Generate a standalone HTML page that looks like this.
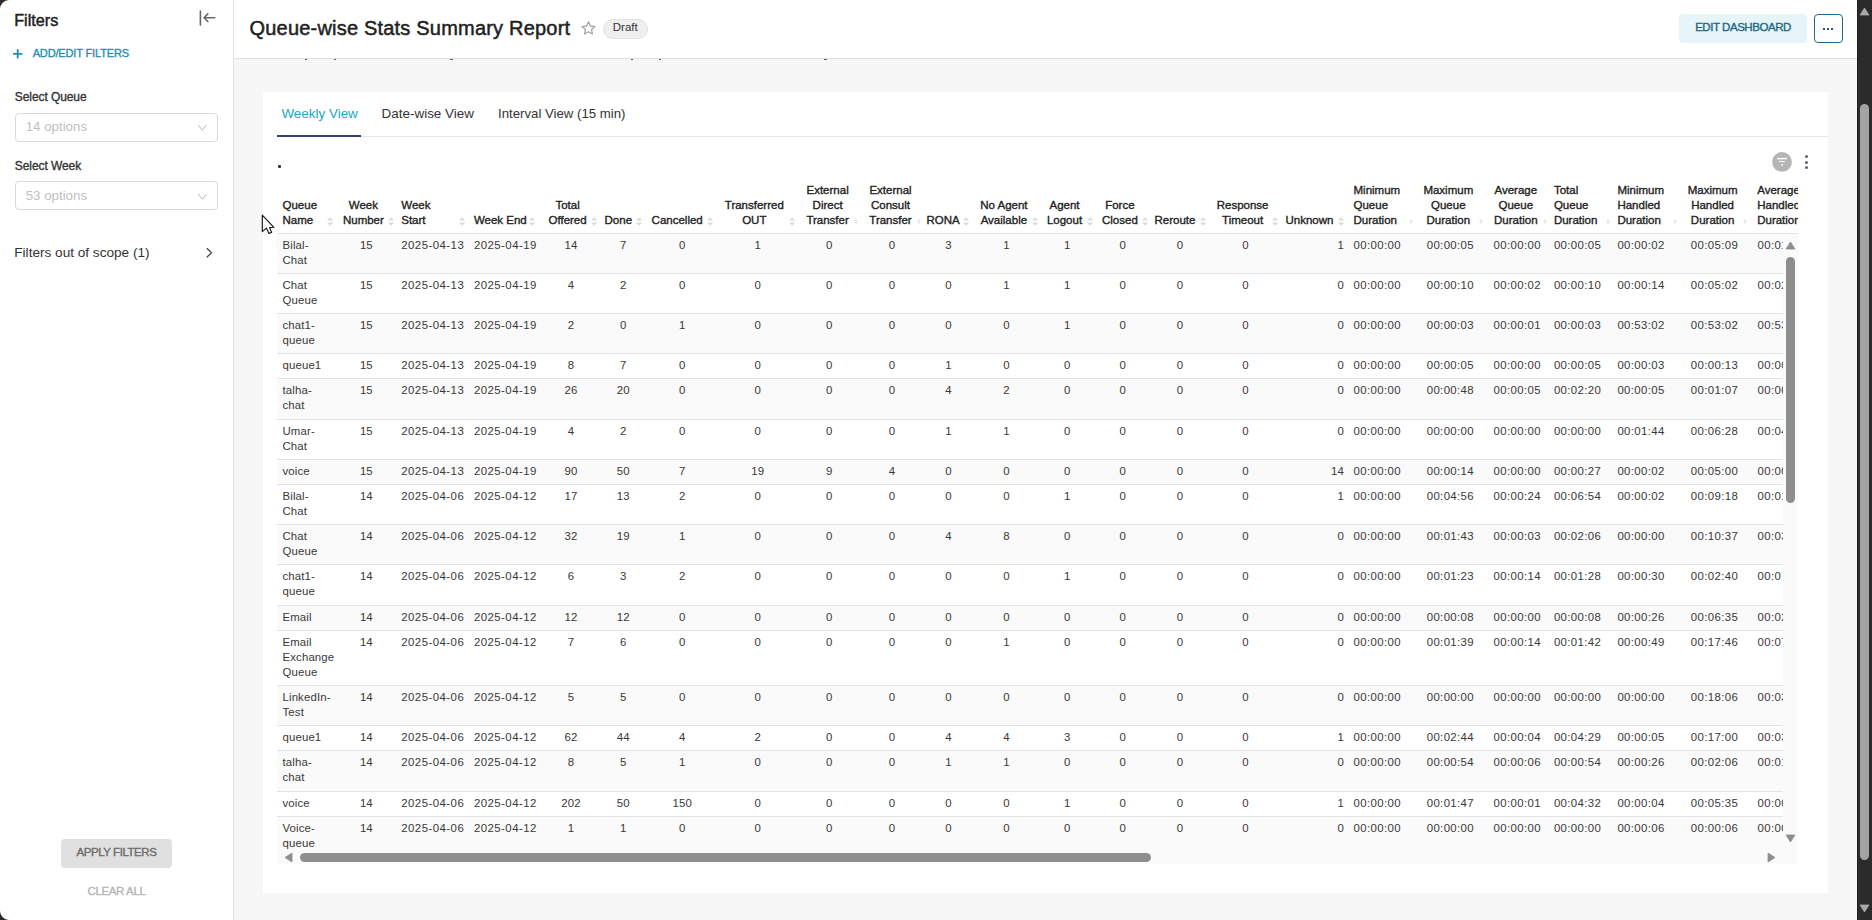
<!DOCTYPE html><html><head><meta charset="utf-8"><title>Queue-wise Stats Summary Report</title><style>

html,body{margin:0;padding:0;}
body{width:1872px;height:920px;overflow:hidden;position:relative;background:#f7f7f7;font-family:"Liberation Sans", sans-serif;color:#333;}
.a{position:absolute;white-space:nowrap;}
.hd{position:absolute;font-size:11.5px;font-weight:normal;line-height:15px;color:#222;white-space:nowrap;-webkit-text-stroke:0.35px #222;}
.td{position:absolute;font-size:11.4px;letter-spacing:0.14px;line-height:15px;color:#383838;white-space:nowrap;}
.ic{position:absolute;}

</style></head><body>
<div style="position:absolute;left:0px;top:0px;width:233px;height:920px;background:#fff;"></div>
<div style="position:absolute;left:233px;top:0px;width:1px;height:920px;background:#e3e3e3;"></div>
<div class="a" style="left:14.2px;top:11.5px;font-size:16.2px;line-height:17px;color:#222;-webkit-text-stroke:0.45px #222;">Filters</div>
<svg class="ic" style="left:196px;top:8px" width="22" height="20" viewBox="0 0 22 20"><path d="M4.4 3v14" stroke="#666" stroke-width="1.6" stroke-linecap="round"/><path d="M18.8 9.7H8.2M11.8 5.9L8 9.7l3.8 3.8" stroke="#666" stroke-width="1.6" fill="none" stroke-linecap="round" stroke-linejoin="round"/></svg>
<svg class="ic" style="left:12px;top:48px" width="12" height="12" viewBox="0 0 12 12"><path d="M5.7 1.2v9.4M1 5.9h9.4" stroke="#1d8fb1" stroke-width="1.8"/></svg>
<div class="a" style="left:32.7px;top:46px;font-size:11px;line-height:14px;color:#1d8fb1;letter-spacing:-0.15px;-webkit-text-stroke:0.35px #1d8fb1;">ADD/EDIT FILTERS</div>
<div class="a" style="left:14.8px;top:90px;font-size:12px;line-height:14px;color:#333;letter-spacing:-0.08px;-webkit-text-stroke:0.35px #333;">Select Queue</div>
<div style="position:absolute;left:14.5px;top:113.3px;width:201px;height:26.4px;border:1px solid #d9d9d9;border-radius:4px;background:#fff;"></div>
<div class="a" style="left:25.7px;top:119px;font-size:13.3px;line-height:16px;color:#bfbfbf;">14 options</div>
<svg class="ic" style="left:196px;top:122px" width="12" height="10" viewBox="0 0 12 10"><path d="M2.2 2.9l4.1 5.4 4.1-5.4" stroke="#bbb" stroke-width="1" fill="none"/></svg>
<div class="a" style="left:14.8px;top:159px;font-size:12px;line-height:14px;color:#333;letter-spacing:-0.08px;-webkit-text-stroke:0.35px #333;">Select Week</div>
<div style="position:absolute;left:14.5px;top:181.4px;width:201px;height:26.4px;border:1px solid #d9d9d9;border-radius:4px;background:#fff;"></div>
<div class="a" style="left:25.7px;top:188px;font-size:13.3px;line-height:16px;color:#bfbfbf;">53 options</div>
<svg class="ic" style="left:196px;top:191px" width="12" height="10" viewBox="0 0 12 10"><path d="M2.2 2.9l4.1 5.4 4.1-5.4" stroke="#bbb" stroke-width="1" fill="none"/></svg>
<div class="a" style="left:14.3px;top:244.5px;font-size:13.6px;line-height:16px;color:#333;">Filters out of scope (1)</div>
<svg class="ic" style="left:203px;top:246px" width="12" height="12" viewBox="0 0 12 12"><path d="M3.8 2.2l4.8 4.5-4.8 4.5" stroke="#444" stroke-width="1.25" fill="none"/></svg>
<div style="position:absolute;left:61.25px;top:839.25px;width:110.5px;height:28.25px;background:#e0e0e0;border-radius:4px;"></div>
<div class="a" style="left:61.25px;top:845px;width:110.5px;text-align:center;font-size:11.5px;line-height:14px;color:#6b6b6b;letter-spacing:-0.45px;-webkit-text-stroke:0.35px #6b6b6b;">APPLY FILTERS</div>
<div class="a" style="left:61.25px;top:884px;width:110.5px;text-align:center;font-size:11.5px;line-height:14px;color:#b5b5b5;letter-spacing:-0.4px;-webkit-text-stroke:0.35px #b5b5b5;">CLEAR ALL</div>
<div style="position:absolute;left:234px;top:0px;width:1623px;height:58px;background:#fff;"></div>
<div style="position:absolute;left:234px;top:58px;width:1623px;height:1px;background:#e0e0e0;"></div>
<div class="a" style="left:249.5px;top:16.5px;font-size:20px;line-height:23px;color:#1f1f1f;letter-spacing:0.2px;-webkit-text-stroke:0.5px #1f1f1f;">Queue-wise Stats Summary Report</div>
<svg class="ic" style="left:580px;top:20px" width="17" height="17" viewBox="0 0 17 17"><path d="M8.5 1.9l1.95 4.1 4.45.55-3.3 3.05.85 4.4L8.5 11.8 4.55 14l.85-4.4L2.1 6.55 6.55 6z" fill="none" stroke="#a6a6a6" stroke-width="1.3" stroke-linejoin="round"/></svg>
<div style="position:absolute;left:603.2px;top:19.1px;width:42.4px;height:17.7px;background:#efefef;border:1px solid #e2e2e2;border-radius:10px;"></div>
<div class="a" style="left:612.8px;top:20.5px;font-size:11.5px;line-height:13px;color:#333;">Draft</div>
<div style="position:absolute;left:305px;top:59px;width:2px;height:1px;background:#5a5a5a;"></div>
<div style="position:absolute;left:334px;top:59px;width:2px;height:1px;background:#5a5a5a;"></div>
<div style="position:absolute;left:450.2px;top:59px;width:2.6px;height:1px;background:#5a5a5a;"></div>
<div style="position:absolute;left:630.5px;top:59px;width:2.3px;height:1px;background:#5a5a5a;"></div>
<div style="position:absolute;left:658.7px;top:59px;width:2.3px;height:1px;background:#5a5a5a;"></div>
<div style="position:absolute;left:824px;top:59px;width:2.6px;height:1px;background:#5a5a5a;"></div>
<div style="position:absolute;left:1679px;top:13.8px;width:128px;height:29.2px;background:#e6f5f8;border-radius:4px;"></div>
<div class="a" style="left:1679px;top:20px;width:128px;text-align:center;font-size:11.5px;line-height:14px;color:#1d6783;letter-spacing:-0.45px;-webkit-text-stroke:0.35px #1d6783;">EDIT DASHBOARD</div>
<div style="position:absolute;left:1814px;top:14px;width:26.8px;height:26.8px;border:1px solid #1d6a86;border-radius:4px;background:#fff;"></div>
<div style="position:absolute;left:1822.9px;top:27.9px;width:2.2px;height:2.2px;background:#164f66;border-radius:0.6px;"></div>
<div style="position:absolute;left:1827px;top:27.9px;width:2.2px;height:2.2px;background:#164f66;border-radius:0.6px;"></div>
<div style="position:absolute;left:1831px;top:27.9px;width:2.2px;height:2.2px;background:#164f66;border-radius:0.6px;"></div>
<div style="position:absolute;left:263px;top:92px;width:1565px;height:801px;background:#fff;"></div>
<div class="a" style="left:281.4px;top:104.5px;font-size:13.45px;line-height:17px;color:#20a6c8;">Weekly View</div>
<div class="a" style="left:381.6px;top:104.5px;font-size:13.45px;line-height:17px;color:#333;">Date-wise View</div>
<div class="a" style="left:498.1px;top:104.5px;font-size:13.2px;line-height:17px;color:#333;">Interval View (15 min)</div>
<div style="position:absolute;left:277px;top:136px;width:1551px;height:1px;background:#e8e8e8;"></div>
<div style="position:absolute;left:277px;top:134.8px;width:84px;height:2px;background:#333d6f;"></div>
<div style="position:absolute;left:278.2px;top:165.4px;width:2.4px;height:2.4px;background:#333;border-radius:1px;"></div>
<svg class="ic" style="left:1771px;top:151px" width="22" height="22" viewBox="0 0 22 22"><circle cx="11" cy="10.9" r="9.9" fill="#b5b5b5"/><path d="M6 7.6h10" stroke="#fff" stroke-width="1.4"/><path d="M8.1 10.6h5.8" stroke="#fff" stroke-width="1"/><rect x="10.3" y="13.1" width="1.6" height="1.7" fill="#fff"/></svg>
<div class="ic" style="left:1805px;top:154.8px;width:3px;height:3px;border-radius:50%;background:#5a6470;"></div>
<div class="ic" style="left:1805px;top:160.5px;width:3px;height:3px;border-radius:50%;background:#5a6470;"></div>
<div class="ic" style="left:1805px;top:165.9px;width:3px;height:3px;border-radius:50%;background:#5a6470;"></div>
<div style="position:absolute;left:277px;top:180px;width:1521px;height:54px;overflow:hidden;">
<div class="hd" style="left:5.5px;top:17.69999999999999px;">Queue<br>Name</div>
<svg class="ic" style="left:50.200000000000024px;top:36.5px" width="6.4" height="9" viewBox="0 0 6.4 9"><path d="M3.2 0.3L6.3 3.6H0.1z M3.2 8.7L6.3 5.4H0.1z" fill="#dadada"/></svg>
<div class="hd" style="left:36.39999999999998px;top:17.69999999999999px;width:100px;text-align:center;">Week<br>Number</div>
<svg class="ic" style="left:110.9px;top:36.5px" width="6.4" height="9" viewBox="0 0 6.4 9"><path d="M3.2 0.3L6.3 3.6H0.1z M3.2 8.7L6.3 5.4H0.1z" fill="#dadada"/></svg>
<div class="hd" style="left:124.25px;top:17.69999999999999px;">Week<br>Start</div>
<svg class="ic" style="left:181.49999999999997px;top:36.5px" width="6.4" height="9" viewBox="0 0 6.4 9"><path d="M3.2 0.3L6.3 3.6H0.1z M3.2 8.7L6.3 5.4H0.1z" fill="#dadada"/></svg>
<div class="hd" style="left:196.89999999999998px;top:32.69999999999999px;">Week End</div>
<svg class="ic" style="left:251.99999999999997px;top:36.5px" width="6.4" height="9" viewBox="0 0 6.4 9"><path d="M3.2 0.3L6.3 3.6H0.1z M3.2 8.7L6.3 5.4H0.1z" fill="#dadada"/></svg>
<div class="hd" style="left:240.60000000000002px;top:17.69999999999999px;width:100px;text-align:center;">Total<br>Offered</div>
<svg class="ic" style="left:314.30000000000007px;top:36.5px" width="6.4" height="9" viewBox="0 0 6.4 9"><path d="M3.2 0.3L6.3 3.6H0.1z M3.2 8.7L6.3 5.4H0.1z" fill="#dadada"/></svg>
<div class="hd" style="left:291.29999999999995px;top:32.69999999999999px;width:100px;text-align:center;">Done</div>
<svg class="ic" style="left:359.0px;top:36.5px" width="6.4" height="9" viewBox="0 0 6.4 9"><path d="M3.2 0.3L6.3 3.6H0.1z M3.2 8.7L6.3 5.4H0.1z" fill="#dadada"/></svg>
<div class="hd" style="left:350.20000000000005px;top:32.69999999999999px;width:100px;text-align:center;">Cancelled</div>
<svg class="ic" style="left:429.80000000000007px;top:36.5px" width="6.4" height="9" viewBox="0 0 6.4 9"><path d="M3.2 0.3L6.3 3.6H0.1z M3.2 8.7L6.3 5.4H0.1z" fill="#dadada"/></svg>
<div class="hd" style="left:427.29999999999995px;top:17.69999999999999px;width:100px;text-align:center;">Transferred<br>OUT</div>
<svg class="ic" style="left:511.5px;top:36.5px" width="6.4" height="9" viewBox="0 0 6.4 9"><path d="M3.2 0.3L6.3 3.6H0.1z M3.2 8.7L6.3 5.4H0.1z" fill="#dadada"/></svg>
<div class="hd" style="left:500.6px;top:2.6999999999999886px;width:100px;text-align:center;">External<br>Direct<br>Transfer</div>
<svg class="ic" style="left:577.2px;top:38.5px" width="4" height="5" viewBox="0 0 4 5"><path d="M2 0.2L3.8 2.2H0.2z M2 4.8L3.8 2.8H0.2z" fill="#e2e2e2"/></svg>
<div class="hd" style="left:563.5px;top:2.6999999999999886px;width:100px;text-align:center;">External<br>Consult<br>Transfer</div>
<svg class="ic" style="left:640px;top:38.5px" width="4" height="5" viewBox="0 0 4 5"><path d="M2 0.2L3.8 2.2H0.2z M2 4.8L3.8 2.8H0.2z" fill="#e2e2e2"/></svg>
<div class="hd" style="left:616.1px;top:32.69999999999999px;width:100px;text-align:center;">RONA</div>
<svg class="ic" style="left:685.6px;top:36.5px" width="6.4" height="9" viewBox="0 0 6.4 9"><path d="M3.2 0.3L6.3 3.6H0.1z M3.2 8.7L6.3 5.4H0.1z" fill="#dadada"/></svg>
<div class="hd" style="left:676.9px;top:17.69999999999999px;width:100px;text-align:center;">No Agent<br>Available</div>
<svg class="ic" style="left:754.8000000000001px;top:36.5px" width="6.4" height="9" viewBox="0 0 6.4 9"><path d="M3.2 0.3L6.3 3.6H0.1z M3.2 8.7L6.3 5.4H0.1z" fill="#dadada"/></svg>
<div class="hd" style="left:737.5px;top:17.69999999999999px;width:100px;text-align:center;">Agent<br>Logout</div>
<svg class="ic" style="left:810.0000000000001px;top:36.5px" width="6.4" height="9" viewBox="0 0 6.4 9"><path d="M3.2 0.3L6.3 3.6H0.1z M3.2 8.7L6.3 5.4H0.1z" fill="#dadada"/></svg>
<div class="hd" style="left:792.9000000000001px;top:17.69999999999999px;width:100px;text-align:center;">Force<br>Closed</div>
<svg class="ic" style="left:864.6px;top:36.5px" width="6.4" height="9" viewBox="0 0 6.4 9"><path d="M3.2 0.3L6.3 3.6H0.1z M3.2 8.7L6.3 5.4H0.1z" fill="#dadada"/></svg>
<div class="hd" style="left:848.0px;top:32.69999999999999px;width:100px;text-align:center;">Reroute</div>
<svg class="ic" style="left:922.9px;top:36.5px" width="6.4" height="9" viewBox="0 0 6.4 9"><path d="M3.2 0.3L6.3 3.6H0.1z M3.2 8.7L6.3 5.4H0.1z" fill="#dadada"/></svg>
<div class="hd" style="left:915.5999999999999px;top:17.69999999999999px;width:100px;text-align:center;">Response<br>Timeout</div>
<svg class="ic" style="left:995.1px;top:36.5px" width="6.4" height="9" viewBox="0 0 6.4 9"><path d="M3.2 0.3L6.3 3.6H0.1z M3.2 8.7L6.3 5.4H0.1z" fill="#dadada"/></svg>
<div class="hd" style="left:982.5px;top:32.69999999999999px;width:100px;text-align:center;">Unknown</div>
<svg class="ic" style="left:1060.8px;top:36.5px" width="6.4" height="9" viewBox="0 0 6.4 9"><path d="M3.2 0.3L6.3 3.6H0.1z M3.2 8.7L6.3 5.4H0.1z" fill="#dadada"/></svg>
<div class="hd" style="left:1076.5px;top:2.6999999999999886px;">Minimum<br>Queue<br>Duration</div>
<svg class="ic" style="left:1132.3px;top:38.5px" width="4" height="5" viewBox="0 0 4 5"><path d="M2 0.2L3.8 2.2H0.2z M2 4.8L3.8 2.8H0.2z" fill="#e2e2e2"/></svg>
<div class="hd" style="left:1121.3px;top:2.6999999999999886px;width:100px;text-align:center;">Maximum<br>Queue<br>Duration</div>
<svg class="ic" style="left:1201.9px;top:38.5px" width="4" height="5" viewBox="0 0 4 5"><path d="M2 0.2L3.8 2.2H0.2z M2 4.8L3.8 2.8H0.2z" fill="#e2e2e2"/></svg>
<div class="hd" style="left:1188.8px;top:2.6999999999999886px;width:100px;text-align:center;">Average<br>Queue<br>Duration</div>
<svg class="ic" style="left:1266px;top:38.5px" width="4" height="5" viewBox="0 0 4 5"><path d="M2 0.2L3.8 2.2H0.2z M2 4.8L3.8 2.8H0.2z" fill="#e2e2e2"/></svg>
<div class="hd" style="left:1276.9px;top:2.6999999999999886px;">Total<br>Queue<br>Duration</div>
<svg class="ic" style="left:1329.25px;top:38.5px" width="4" height="5" viewBox="0 0 4 5"><path d="M2 0.2L3.8 2.2H0.2z M2 4.8L3.8 2.8H0.2z" fill="#e2e2e2"/></svg>
<div class="hd" style="left:1340.4px;top:2.6999999999999886px;">Minimum<br>Handled<br>Duration</div>
<svg class="ic" style="left:1395.9px;top:38.5px" width="4" height="5" viewBox="0 0 4 5"><path d="M2 0.2L3.8 2.2H0.2z M2 4.8L3.8 2.8H0.2z" fill="#e2e2e2"/></svg>
<div class="hd" style="left:1385.6px;top:2.6999999999999886px;width:100px;text-align:center;">Maximum<br>Handled<br>Duration</div>
<svg class="ic" style="left:1466px;top:38.5px" width="4" height="5" viewBox="0 0 4 5"><path d="M2 0.2L3.8 2.2H0.2z M2 4.8L3.8 2.8H0.2z" fill="#e2e2e2"/></svg>
<div class="hd" style="left:1480.2px;top:2.6999999999999886px;">Average<br>Handled<br>Duration</div>
<div style="position:absolute;left:0px;top:53px;width:1521px;height:1px;background:#e3e3e3;"></div>
</div>
<div style="position:absolute;left:277px;top:234px;width:1506px;height:615px;overflow:hidden;background:#fafafa;">
<div style="position:absolute;left:0px;top:0px;width:1506px;height:39px;background:#fafafa;"></div>
<div class="td" style="left:5.5px;top:4.1px;letter-spacing:0.14px;">Bilal-<br>Chat</div>
<div class="td" style="left:39.37000000000001px;top:4.1px;width:100px;text-align:center;letter-spacing:0.14px;">15</div>
<div class="td" style="left:124.25px;top:4.1px;letter-spacing:0.47px;">2025-04-13</div>
<div class="td" style="left:196.89999999999998px;top:4.1px;letter-spacing:0.47px;">2025-04-19</div>
<div class="td" style="left:244.07px;top:4.1px;width:100px;text-align:center;letter-spacing:0.14px;">14</div>
<div class="td" style="left:296.27000000000004px;top:4.1px;width:100px;text-align:center;letter-spacing:0.14px;">7</div>
<div class="td" style="left:355.27000000000004px;top:4.1px;width:100px;text-align:center;letter-spacing:0.14px;">0</div>
<div class="td" style="left:430.67px;top:4.1px;width:100px;text-align:center;letter-spacing:0.14px;">1</div>
<div class="td" style="left:502.27000000000004px;top:4.1px;width:100px;text-align:center;letter-spacing:0.14px;">0</div>
<div class="td" style="left:565.07px;top:4.1px;width:100px;text-align:center;letter-spacing:0.14px;">0</div>
<div class="td" style="left:621.57px;top:4.1px;width:100px;text-align:center;letter-spacing:0.14px;">3</div>
<div class="td" style="left:679.47px;top:4.1px;width:100px;text-align:center;letter-spacing:0.14px;">1</div>
<div class="td" style="left:740.2700000000001px;top:4.1px;width:100px;text-align:center;letter-spacing:0.14px;">1</div>
<div class="td" style="left:795.87px;top:4.1px;width:100px;text-align:center;letter-spacing:0.14px;">0</div>
<div class="td" style="left:853.07px;top:4.1px;width:100px;text-align:center;letter-spacing:0.14px;">0</div>
<div class="td" style="left:918.4700000000001px;top:4.1px;width:100px;text-align:center;letter-spacing:0.14px;">0</div>
<div class="td" style="left:967px;top:4.1px;width:100px;text-align:right;">1</div>
<div class="td" style="left:1076.5px;top:4.1px;letter-spacing:0.38px;">00:00:00</div>
<div class="td" style="left:1123.39px;top:4.1px;width:100px;text-align:center;letter-spacing:0.38px;">00:00:05</div>
<div class="td" style="left:1190.19px;top:4.1px;width:100px;text-align:center;letter-spacing:0.38px;">00:00:00</div>
<div class="td" style="left:1276.9px;top:4.1px;letter-spacing:0.38px;">00:00:05</div>
<div class="td" style="left:1340.4px;top:4.1px;letter-spacing:0.38px;">00:00:02</div>
<div class="td" style="left:1387.49px;top:4.1px;width:100px;text-align:center;letter-spacing:0.38px;">00:05:09</div>
<div class="td" style="left:1480.6px;top:4.1px;letter-spacing:0.38px;">00:01:09</div>
<div style="position:absolute;left:0px;top:39px;width:1506px;height:1px;background:#e3e3e3;"></div>
<div style="position:absolute;left:0px;top:40px;width:1506px;height:39px;background:#ffffff;"></div>
<div class="td" style="left:5.5px;top:44.1px;letter-spacing:0.14px;">Chat<br>Queue</div>
<div class="td" style="left:39.37000000000001px;top:44.1px;width:100px;text-align:center;letter-spacing:0.14px;">15</div>
<div class="td" style="left:124.25px;top:44.1px;letter-spacing:0.47px;">2025-04-13</div>
<div class="td" style="left:196.89999999999998px;top:44.1px;letter-spacing:0.47px;">2025-04-19</div>
<div class="td" style="left:244.07px;top:44.1px;width:100px;text-align:center;letter-spacing:0.14px;">4</div>
<div class="td" style="left:296.27000000000004px;top:44.1px;width:100px;text-align:center;letter-spacing:0.14px;">2</div>
<div class="td" style="left:355.27000000000004px;top:44.1px;width:100px;text-align:center;letter-spacing:0.14px;">0</div>
<div class="td" style="left:430.67px;top:44.1px;width:100px;text-align:center;letter-spacing:0.14px;">0</div>
<div class="td" style="left:502.27000000000004px;top:44.1px;width:100px;text-align:center;letter-spacing:0.14px;">0</div>
<div class="td" style="left:565.07px;top:44.1px;width:100px;text-align:center;letter-spacing:0.14px;">0</div>
<div class="td" style="left:621.57px;top:44.1px;width:100px;text-align:center;letter-spacing:0.14px;">0</div>
<div class="td" style="left:679.47px;top:44.1px;width:100px;text-align:center;letter-spacing:0.14px;">1</div>
<div class="td" style="left:740.2700000000001px;top:44.1px;width:100px;text-align:center;letter-spacing:0.14px;">1</div>
<div class="td" style="left:795.87px;top:44.1px;width:100px;text-align:center;letter-spacing:0.14px;">0</div>
<div class="td" style="left:853.07px;top:44.1px;width:100px;text-align:center;letter-spacing:0.14px;">0</div>
<div class="td" style="left:918.4700000000001px;top:44.1px;width:100px;text-align:center;letter-spacing:0.14px;">0</div>
<div class="td" style="left:967px;top:44.1px;width:100px;text-align:right;">0</div>
<div class="td" style="left:1076.5px;top:44.1px;letter-spacing:0.38px;">00:00:00</div>
<div class="td" style="left:1123.39px;top:44.1px;width:100px;text-align:center;letter-spacing:0.38px;">00:00:10</div>
<div class="td" style="left:1190.19px;top:44.1px;width:100px;text-align:center;letter-spacing:0.38px;">00:00:02</div>
<div class="td" style="left:1276.9px;top:44.1px;letter-spacing:0.38px;">00:00:10</div>
<div class="td" style="left:1340.4px;top:44.1px;letter-spacing:0.38px;">00:00:14</div>
<div class="td" style="left:1387.49px;top:44.1px;width:100px;text-align:center;letter-spacing:0.38px;">00:05:02</div>
<div class="td" style="left:1480.6px;top:44.1px;letter-spacing:0.38px;">00:02:38</div>
<div style="position:absolute;left:0px;top:79px;width:1506px;height:1px;background:#e3e3e3;"></div>
<div style="position:absolute;left:0px;top:80px;width:1506px;height:39px;background:#fafafa;"></div>
<div class="td" style="left:5.5px;top:84.1px;letter-spacing:0.14px;">chat1-<br>queue</div>
<div class="td" style="left:39.37000000000001px;top:84.1px;width:100px;text-align:center;letter-spacing:0.14px;">15</div>
<div class="td" style="left:124.25px;top:84.1px;letter-spacing:0.47px;">2025-04-13</div>
<div class="td" style="left:196.89999999999998px;top:84.1px;letter-spacing:0.47px;">2025-04-19</div>
<div class="td" style="left:244.07px;top:84.1px;width:100px;text-align:center;letter-spacing:0.14px;">2</div>
<div class="td" style="left:296.27000000000004px;top:84.1px;width:100px;text-align:center;letter-spacing:0.14px;">0</div>
<div class="td" style="left:355.27000000000004px;top:84.1px;width:100px;text-align:center;letter-spacing:0.14px;">1</div>
<div class="td" style="left:430.67px;top:84.1px;width:100px;text-align:center;letter-spacing:0.14px;">0</div>
<div class="td" style="left:502.27000000000004px;top:84.1px;width:100px;text-align:center;letter-spacing:0.14px;">0</div>
<div class="td" style="left:565.07px;top:84.1px;width:100px;text-align:center;letter-spacing:0.14px;">0</div>
<div class="td" style="left:621.57px;top:84.1px;width:100px;text-align:center;letter-spacing:0.14px;">0</div>
<div class="td" style="left:679.47px;top:84.1px;width:100px;text-align:center;letter-spacing:0.14px;">0</div>
<div class="td" style="left:740.2700000000001px;top:84.1px;width:100px;text-align:center;letter-spacing:0.14px;">1</div>
<div class="td" style="left:795.87px;top:84.1px;width:100px;text-align:center;letter-spacing:0.14px;">0</div>
<div class="td" style="left:853.07px;top:84.1px;width:100px;text-align:center;letter-spacing:0.14px;">0</div>
<div class="td" style="left:918.4700000000001px;top:84.1px;width:100px;text-align:center;letter-spacing:0.14px;">0</div>
<div class="td" style="left:967px;top:84.1px;width:100px;text-align:right;">0</div>
<div class="td" style="left:1076.5px;top:84.1px;letter-spacing:0.38px;">00:00:00</div>
<div class="td" style="left:1123.39px;top:84.1px;width:100px;text-align:center;letter-spacing:0.38px;">00:00:03</div>
<div class="td" style="left:1190.19px;top:84.1px;width:100px;text-align:center;letter-spacing:0.38px;">00:00:01</div>
<div class="td" style="left:1276.9px;top:84.1px;letter-spacing:0.38px;">00:00:03</div>
<div class="td" style="left:1340.4px;top:84.1px;letter-spacing:0.38px;">00:53:02</div>
<div class="td" style="left:1387.49px;top:84.1px;width:100px;text-align:center;letter-spacing:0.38px;">00:53:02</div>
<div class="td" style="left:1480.6px;top:84.1px;letter-spacing:0.38px;">00:53:02</div>
<div style="position:absolute;left:0px;top:119px;width:1506px;height:1px;background:#e3e3e3;"></div>
<div style="position:absolute;left:0px;top:120px;width:1506px;height:24px;background:#ffffff;"></div>
<div class="td" style="left:5.5px;top:124.1px;letter-spacing:0.14px;">queue1</div>
<div class="td" style="left:39.37000000000001px;top:124.1px;width:100px;text-align:center;letter-spacing:0.14px;">15</div>
<div class="td" style="left:124.25px;top:124.1px;letter-spacing:0.47px;">2025-04-13</div>
<div class="td" style="left:196.89999999999998px;top:124.1px;letter-spacing:0.47px;">2025-04-19</div>
<div class="td" style="left:244.07px;top:124.1px;width:100px;text-align:center;letter-spacing:0.14px;">8</div>
<div class="td" style="left:296.27000000000004px;top:124.1px;width:100px;text-align:center;letter-spacing:0.14px;">7</div>
<div class="td" style="left:355.27000000000004px;top:124.1px;width:100px;text-align:center;letter-spacing:0.14px;">0</div>
<div class="td" style="left:430.67px;top:124.1px;width:100px;text-align:center;letter-spacing:0.14px;">0</div>
<div class="td" style="left:502.27000000000004px;top:124.1px;width:100px;text-align:center;letter-spacing:0.14px;">0</div>
<div class="td" style="left:565.07px;top:124.1px;width:100px;text-align:center;letter-spacing:0.14px;">0</div>
<div class="td" style="left:621.57px;top:124.1px;width:100px;text-align:center;letter-spacing:0.14px;">1</div>
<div class="td" style="left:679.47px;top:124.1px;width:100px;text-align:center;letter-spacing:0.14px;">0</div>
<div class="td" style="left:740.2700000000001px;top:124.1px;width:100px;text-align:center;letter-spacing:0.14px;">0</div>
<div class="td" style="left:795.87px;top:124.1px;width:100px;text-align:center;letter-spacing:0.14px;">0</div>
<div class="td" style="left:853.07px;top:124.1px;width:100px;text-align:center;letter-spacing:0.14px;">0</div>
<div class="td" style="left:918.4700000000001px;top:124.1px;width:100px;text-align:center;letter-spacing:0.14px;">0</div>
<div class="td" style="left:967px;top:124.1px;width:100px;text-align:right;">0</div>
<div class="td" style="left:1076.5px;top:124.1px;letter-spacing:0.38px;">00:00:00</div>
<div class="td" style="left:1123.39px;top:124.1px;width:100px;text-align:center;letter-spacing:0.38px;">00:00:05</div>
<div class="td" style="left:1190.19px;top:124.1px;width:100px;text-align:center;letter-spacing:0.38px;">00:00:00</div>
<div class="td" style="left:1276.9px;top:124.1px;letter-spacing:0.38px;">00:00:05</div>
<div class="td" style="left:1340.4px;top:124.1px;letter-spacing:0.38px;">00:00:03</div>
<div class="td" style="left:1387.49px;top:124.1px;width:100px;text-align:center;letter-spacing:0.38px;">00:00:13</div>
<div class="td" style="left:1480.6px;top:124.1px;letter-spacing:0.38px;">00:00:06</div>
<div style="position:absolute;left:0px;top:144px;width:1506px;height:1px;background:#e3e3e3;"></div>
<div style="position:absolute;left:0px;top:145px;width:1506px;height:40px;background:#fafafa;"></div>
<div class="td" style="left:5.5px;top:149.1px;letter-spacing:0.14px;">talha-<br>chat</div>
<div class="td" style="left:39.37000000000001px;top:149.1px;width:100px;text-align:center;letter-spacing:0.14px;">15</div>
<div class="td" style="left:124.25px;top:149.1px;letter-spacing:0.47px;">2025-04-13</div>
<div class="td" style="left:196.89999999999998px;top:149.1px;letter-spacing:0.47px;">2025-04-19</div>
<div class="td" style="left:244.07px;top:149.1px;width:100px;text-align:center;letter-spacing:0.14px;">26</div>
<div class="td" style="left:296.27000000000004px;top:149.1px;width:100px;text-align:center;letter-spacing:0.14px;">20</div>
<div class="td" style="left:355.27000000000004px;top:149.1px;width:100px;text-align:center;letter-spacing:0.14px;">0</div>
<div class="td" style="left:430.67px;top:149.1px;width:100px;text-align:center;letter-spacing:0.14px;">0</div>
<div class="td" style="left:502.27000000000004px;top:149.1px;width:100px;text-align:center;letter-spacing:0.14px;">0</div>
<div class="td" style="left:565.07px;top:149.1px;width:100px;text-align:center;letter-spacing:0.14px;">0</div>
<div class="td" style="left:621.57px;top:149.1px;width:100px;text-align:center;letter-spacing:0.14px;">4</div>
<div class="td" style="left:679.47px;top:149.1px;width:100px;text-align:center;letter-spacing:0.14px;">2</div>
<div class="td" style="left:740.2700000000001px;top:149.1px;width:100px;text-align:center;letter-spacing:0.14px;">0</div>
<div class="td" style="left:795.87px;top:149.1px;width:100px;text-align:center;letter-spacing:0.14px;">0</div>
<div class="td" style="left:853.07px;top:149.1px;width:100px;text-align:center;letter-spacing:0.14px;">0</div>
<div class="td" style="left:918.4700000000001px;top:149.1px;width:100px;text-align:center;letter-spacing:0.14px;">0</div>
<div class="td" style="left:967px;top:149.1px;width:100px;text-align:right;">0</div>
<div class="td" style="left:1076.5px;top:149.1px;letter-spacing:0.38px;">00:00:00</div>
<div class="td" style="left:1123.39px;top:149.1px;width:100px;text-align:center;letter-spacing:0.38px;">00:00:48</div>
<div class="td" style="left:1190.19px;top:149.1px;width:100px;text-align:center;letter-spacing:0.38px;">00:00:05</div>
<div class="td" style="left:1276.9px;top:149.1px;letter-spacing:0.38px;">00:02:20</div>
<div class="td" style="left:1340.4px;top:149.1px;letter-spacing:0.38px;">00:00:05</div>
<div class="td" style="left:1387.49px;top:149.1px;width:100px;text-align:center;letter-spacing:0.38px;">00:01:07</div>
<div class="td" style="left:1480.6px;top:149.1px;letter-spacing:0.38px;">00:00:27</div>
<div style="position:absolute;left:0px;top:185px;width:1506px;height:1px;background:#e3e3e3;"></div>
<div style="position:absolute;left:0px;top:186px;width:1506px;height:39px;background:#ffffff;"></div>
<div class="td" style="left:5.5px;top:190.1px;letter-spacing:0.14px;">Umar-<br>Chat</div>
<div class="td" style="left:39.37000000000001px;top:190.1px;width:100px;text-align:center;letter-spacing:0.14px;">15</div>
<div class="td" style="left:124.25px;top:190.1px;letter-spacing:0.47px;">2025-04-13</div>
<div class="td" style="left:196.89999999999998px;top:190.1px;letter-spacing:0.47px;">2025-04-19</div>
<div class="td" style="left:244.07px;top:190.1px;width:100px;text-align:center;letter-spacing:0.14px;">4</div>
<div class="td" style="left:296.27000000000004px;top:190.1px;width:100px;text-align:center;letter-spacing:0.14px;">2</div>
<div class="td" style="left:355.27000000000004px;top:190.1px;width:100px;text-align:center;letter-spacing:0.14px;">0</div>
<div class="td" style="left:430.67px;top:190.1px;width:100px;text-align:center;letter-spacing:0.14px;">0</div>
<div class="td" style="left:502.27000000000004px;top:190.1px;width:100px;text-align:center;letter-spacing:0.14px;">0</div>
<div class="td" style="left:565.07px;top:190.1px;width:100px;text-align:center;letter-spacing:0.14px;">0</div>
<div class="td" style="left:621.57px;top:190.1px;width:100px;text-align:center;letter-spacing:0.14px;">1</div>
<div class="td" style="left:679.47px;top:190.1px;width:100px;text-align:center;letter-spacing:0.14px;">1</div>
<div class="td" style="left:740.2700000000001px;top:190.1px;width:100px;text-align:center;letter-spacing:0.14px;">0</div>
<div class="td" style="left:795.87px;top:190.1px;width:100px;text-align:center;letter-spacing:0.14px;">0</div>
<div class="td" style="left:853.07px;top:190.1px;width:100px;text-align:center;letter-spacing:0.14px;">0</div>
<div class="td" style="left:918.4700000000001px;top:190.1px;width:100px;text-align:center;letter-spacing:0.14px;">0</div>
<div class="td" style="left:967px;top:190.1px;width:100px;text-align:right;">0</div>
<div class="td" style="left:1076.5px;top:190.1px;letter-spacing:0.38px;">00:00:00</div>
<div class="td" style="left:1123.39px;top:190.1px;width:100px;text-align:center;letter-spacing:0.38px;">00:00:00</div>
<div class="td" style="left:1190.19px;top:190.1px;width:100px;text-align:center;letter-spacing:0.38px;">00:00:00</div>
<div class="td" style="left:1276.9px;top:190.1px;letter-spacing:0.38px;">00:00:00</div>
<div class="td" style="left:1340.4px;top:190.1px;letter-spacing:0.38px;">00:01:44</div>
<div class="td" style="left:1387.49px;top:190.1px;width:100px;text-align:center;letter-spacing:0.38px;">00:06:28</div>
<div class="td" style="left:1480.6px;top:190.1px;letter-spacing:0.38px;">00:04:06</div>
<div style="position:absolute;left:0px;top:225px;width:1506px;height:1px;background:#e3e3e3;"></div>
<div style="position:absolute;left:0px;top:226px;width:1506px;height:24px;background:#fafafa;"></div>
<div class="td" style="left:5.5px;top:230.1px;letter-spacing:0.14px;">voice</div>
<div class="td" style="left:39.37000000000001px;top:230.1px;width:100px;text-align:center;letter-spacing:0.14px;">15</div>
<div class="td" style="left:124.25px;top:230.1px;letter-spacing:0.47px;">2025-04-13</div>
<div class="td" style="left:196.89999999999998px;top:230.1px;letter-spacing:0.47px;">2025-04-19</div>
<div class="td" style="left:244.07px;top:230.1px;width:100px;text-align:center;letter-spacing:0.14px;">90</div>
<div class="td" style="left:296.27000000000004px;top:230.1px;width:100px;text-align:center;letter-spacing:0.14px;">50</div>
<div class="td" style="left:355.27000000000004px;top:230.1px;width:100px;text-align:center;letter-spacing:0.14px;">7</div>
<div class="td" style="left:430.67px;top:230.1px;width:100px;text-align:center;letter-spacing:0.14px;">19</div>
<div class="td" style="left:502.27000000000004px;top:230.1px;width:100px;text-align:center;letter-spacing:0.14px;">9</div>
<div class="td" style="left:565.07px;top:230.1px;width:100px;text-align:center;letter-spacing:0.14px;">4</div>
<div class="td" style="left:621.57px;top:230.1px;width:100px;text-align:center;letter-spacing:0.14px;">0</div>
<div class="td" style="left:679.47px;top:230.1px;width:100px;text-align:center;letter-spacing:0.14px;">0</div>
<div class="td" style="left:740.2700000000001px;top:230.1px;width:100px;text-align:center;letter-spacing:0.14px;">0</div>
<div class="td" style="left:795.87px;top:230.1px;width:100px;text-align:center;letter-spacing:0.14px;">0</div>
<div class="td" style="left:853.07px;top:230.1px;width:100px;text-align:center;letter-spacing:0.14px;">0</div>
<div class="td" style="left:918.4700000000001px;top:230.1px;width:100px;text-align:center;letter-spacing:0.14px;">0</div>
<div class="td" style="left:967px;top:230.1px;width:100px;text-align:right;">14</div>
<div class="td" style="left:1076.5px;top:230.1px;letter-spacing:0.38px;">00:00:00</div>
<div class="td" style="left:1123.39px;top:230.1px;width:100px;text-align:center;letter-spacing:0.38px;">00:00:14</div>
<div class="td" style="left:1190.19px;top:230.1px;width:100px;text-align:center;letter-spacing:0.38px;">00:00:00</div>
<div class="td" style="left:1276.9px;top:230.1px;letter-spacing:0.38px;">00:00:27</div>
<div class="td" style="left:1340.4px;top:230.1px;letter-spacing:0.38px;">00:00:02</div>
<div class="td" style="left:1387.49px;top:230.1px;width:100px;text-align:center;letter-spacing:0.38px;">00:05:00</div>
<div class="td" style="left:1480.6px;top:230.1px;letter-spacing:0.38px;">00:00:30</div>
<div style="position:absolute;left:0px;top:250px;width:1506px;height:1px;background:#e3e3e3;"></div>
<div style="position:absolute;left:0px;top:251px;width:1506px;height:39px;background:#ffffff;"></div>
<div class="td" style="left:5.5px;top:255.1px;letter-spacing:0.14px;">Bilal-<br>Chat</div>
<div class="td" style="left:39.37000000000001px;top:255.1px;width:100px;text-align:center;letter-spacing:0.14px;">14</div>
<div class="td" style="left:124.25px;top:255.1px;letter-spacing:0.47px;">2025-04-06</div>
<div class="td" style="left:196.89999999999998px;top:255.1px;letter-spacing:0.47px;">2025-04-12</div>
<div class="td" style="left:244.07px;top:255.1px;width:100px;text-align:center;letter-spacing:0.14px;">17</div>
<div class="td" style="left:296.27000000000004px;top:255.1px;width:100px;text-align:center;letter-spacing:0.14px;">13</div>
<div class="td" style="left:355.27000000000004px;top:255.1px;width:100px;text-align:center;letter-spacing:0.14px;">2</div>
<div class="td" style="left:430.67px;top:255.1px;width:100px;text-align:center;letter-spacing:0.14px;">0</div>
<div class="td" style="left:502.27000000000004px;top:255.1px;width:100px;text-align:center;letter-spacing:0.14px;">0</div>
<div class="td" style="left:565.07px;top:255.1px;width:100px;text-align:center;letter-spacing:0.14px;">0</div>
<div class="td" style="left:621.57px;top:255.1px;width:100px;text-align:center;letter-spacing:0.14px;">0</div>
<div class="td" style="left:679.47px;top:255.1px;width:100px;text-align:center;letter-spacing:0.14px;">0</div>
<div class="td" style="left:740.2700000000001px;top:255.1px;width:100px;text-align:center;letter-spacing:0.14px;">1</div>
<div class="td" style="left:795.87px;top:255.1px;width:100px;text-align:center;letter-spacing:0.14px;">0</div>
<div class="td" style="left:853.07px;top:255.1px;width:100px;text-align:center;letter-spacing:0.14px;">0</div>
<div class="td" style="left:918.4700000000001px;top:255.1px;width:100px;text-align:center;letter-spacing:0.14px;">0</div>
<div class="td" style="left:967px;top:255.1px;width:100px;text-align:right;">1</div>
<div class="td" style="left:1076.5px;top:255.1px;letter-spacing:0.38px;">00:00:00</div>
<div class="td" style="left:1123.39px;top:255.1px;width:100px;text-align:center;letter-spacing:0.38px;">00:04:56</div>
<div class="td" style="left:1190.19px;top:255.1px;width:100px;text-align:center;letter-spacing:0.38px;">00:00:24</div>
<div class="td" style="left:1276.9px;top:255.1px;letter-spacing:0.38px;">00:06:54</div>
<div class="td" style="left:1340.4px;top:255.1px;letter-spacing:0.38px;">00:00:02</div>
<div class="td" style="left:1387.49px;top:255.1px;width:100px;text-align:center;letter-spacing:0.38px;">00:09:18</div>
<div class="td" style="left:1480.6px;top:255.1px;letter-spacing:0.38px;">00:01:19</div>
<div style="position:absolute;left:0px;top:290px;width:1506px;height:1px;background:#e3e3e3;"></div>
<div style="position:absolute;left:0px;top:291px;width:1506px;height:39px;background:#fafafa;"></div>
<div class="td" style="left:5.5px;top:295.1px;letter-spacing:0.14px;">Chat<br>Queue</div>
<div class="td" style="left:39.37000000000001px;top:295.1px;width:100px;text-align:center;letter-spacing:0.14px;">14</div>
<div class="td" style="left:124.25px;top:295.1px;letter-spacing:0.47px;">2025-04-06</div>
<div class="td" style="left:196.89999999999998px;top:295.1px;letter-spacing:0.47px;">2025-04-12</div>
<div class="td" style="left:244.07px;top:295.1px;width:100px;text-align:center;letter-spacing:0.14px;">32</div>
<div class="td" style="left:296.27000000000004px;top:295.1px;width:100px;text-align:center;letter-spacing:0.14px;">19</div>
<div class="td" style="left:355.27000000000004px;top:295.1px;width:100px;text-align:center;letter-spacing:0.14px;">1</div>
<div class="td" style="left:430.67px;top:295.1px;width:100px;text-align:center;letter-spacing:0.14px;">0</div>
<div class="td" style="left:502.27000000000004px;top:295.1px;width:100px;text-align:center;letter-spacing:0.14px;">0</div>
<div class="td" style="left:565.07px;top:295.1px;width:100px;text-align:center;letter-spacing:0.14px;">0</div>
<div class="td" style="left:621.57px;top:295.1px;width:100px;text-align:center;letter-spacing:0.14px;">4</div>
<div class="td" style="left:679.47px;top:295.1px;width:100px;text-align:center;letter-spacing:0.14px;">8</div>
<div class="td" style="left:740.2700000000001px;top:295.1px;width:100px;text-align:center;letter-spacing:0.14px;">0</div>
<div class="td" style="left:795.87px;top:295.1px;width:100px;text-align:center;letter-spacing:0.14px;">0</div>
<div class="td" style="left:853.07px;top:295.1px;width:100px;text-align:center;letter-spacing:0.14px;">0</div>
<div class="td" style="left:918.4700000000001px;top:295.1px;width:100px;text-align:center;letter-spacing:0.14px;">0</div>
<div class="td" style="left:967px;top:295.1px;width:100px;text-align:right;">0</div>
<div class="td" style="left:1076.5px;top:295.1px;letter-spacing:0.38px;">00:00:00</div>
<div class="td" style="left:1123.39px;top:295.1px;width:100px;text-align:center;letter-spacing:0.38px;">00:01:43</div>
<div class="td" style="left:1190.19px;top:295.1px;width:100px;text-align:center;letter-spacing:0.38px;">00:00:03</div>
<div class="td" style="left:1276.9px;top:295.1px;letter-spacing:0.38px;">00:02:06</div>
<div class="td" style="left:1340.4px;top:295.1px;letter-spacing:0.38px;">00:00:00</div>
<div class="td" style="left:1387.49px;top:295.1px;width:100px;text-align:center;letter-spacing:0.38px;">00:10:37</div>
<div class="td" style="left:1480.6px;top:295.1px;letter-spacing:0.38px;">00:03:16</div>
<div style="position:absolute;left:0px;top:330px;width:1506px;height:1px;background:#e3e3e3;"></div>
<div style="position:absolute;left:0px;top:331px;width:1506px;height:40px;background:#ffffff;"></div>
<div class="td" style="left:5.5px;top:335.1px;letter-spacing:0.14px;">chat1-<br>queue</div>
<div class="td" style="left:39.37000000000001px;top:335.1px;width:100px;text-align:center;letter-spacing:0.14px;">14</div>
<div class="td" style="left:124.25px;top:335.1px;letter-spacing:0.47px;">2025-04-06</div>
<div class="td" style="left:196.89999999999998px;top:335.1px;letter-spacing:0.47px;">2025-04-12</div>
<div class="td" style="left:244.07px;top:335.1px;width:100px;text-align:center;letter-spacing:0.14px;">6</div>
<div class="td" style="left:296.27000000000004px;top:335.1px;width:100px;text-align:center;letter-spacing:0.14px;">3</div>
<div class="td" style="left:355.27000000000004px;top:335.1px;width:100px;text-align:center;letter-spacing:0.14px;">2</div>
<div class="td" style="left:430.67px;top:335.1px;width:100px;text-align:center;letter-spacing:0.14px;">0</div>
<div class="td" style="left:502.27000000000004px;top:335.1px;width:100px;text-align:center;letter-spacing:0.14px;">0</div>
<div class="td" style="left:565.07px;top:335.1px;width:100px;text-align:center;letter-spacing:0.14px;">0</div>
<div class="td" style="left:621.57px;top:335.1px;width:100px;text-align:center;letter-spacing:0.14px;">0</div>
<div class="td" style="left:679.47px;top:335.1px;width:100px;text-align:center;letter-spacing:0.14px;">0</div>
<div class="td" style="left:740.2700000000001px;top:335.1px;width:100px;text-align:center;letter-spacing:0.14px;">1</div>
<div class="td" style="left:795.87px;top:335.1px;width:100px;text-align:center;letter-spacing:0.14px;">0</div>
<div class="td" style="left:853.07px;top:335.1px;width:100px;text-align:center;letter-spacing:0.14px;">0</div>
<div class="td" style="left:918.4700000000001px;top:335.1px;width:100px;text-align:center;letter-spacing:0.14px;">0</div>
<div class="td" style="left:967px;top:335.1px;width:100px;text-align:right;">0</div>
<div class="td" style="left:1076.5px;top:335.1px;letter-spacing:0.38px;">00:00:00</div>
<div class="td" style="left:1123.39px;top:335.1px;width:100px;text-align:center;letter-spacing:0.38px;">00:01:23</div>
<div class="td" style="left:1190.19px;top:335.1px;width:100px;text-align:center;letter-spacing:0.38px;">00:00:14</div>
<div class="td" style="left:1276.9px;top:335.1px;letter-spacing:0.38px;">00:01:28</div>
<div class="td" style="left:1340.4px;top:335.1px;letter-spacing:0.38px;">00:00:30</div>
<div class="td" style="left:1387.49px;top:335.1px;width:100px;text-align:center;letter-spacing:0.38px;">00:02:40</div>
<div class="td" style="left:1480.6px;top:335.1px;letter-spacing:0.38px;">00:0 1:35</div>
<div style="position:absolute;left:0px;top:371px;width:1506px;height:1px;background:#e3e3e3;"></div>
<div style="position:absolute;left:0px;top:372px;width:1506px;height:24px;background:#fafafa;"></div>
<div class="td" style="left:5.5px;top:376.1px;letter-spacing:0.14px;">Email</div>
<div class="td" style="left:39.37000000000001px;top:376.1px;width:100px;text-align:center;letter-spacing:0.14px;">14</div>
<div class="td" style="left:124.25px;top:376.1px;letter-spacing:0.47px;">2025-04-06</div>
<div class="td" style="left:196.89999999999998px;top:376.1px;letter-spacing:0.47px;">2025-04-12</div>
<div class="td" style="left:244.07px;top:376.1px;width:100px;text-align:center;letter-spacing:0.14px;">12</div>
<div class="td" style="left:296.27000000000004px;top:376.1px;width:100px;text-align:center;letter-spacing:0.14px;">12</div>
<div class="td" style="left:355.27000000000004px;top:376.1px;width:100px;text-align:center;letter-spacing:0.14px;">0</div>
<div class="td" style="left:430.67px;top:376.1px;width:100px;text-align:center;letter-spacing:0.14px;">0</div>
<div class="td" style="left:502.27000000000004px;top:376.1px;width:100px;text-align:center;letter-spacing:0.14px;">0</div>
<div class="td" style="left:565.07px;top:376.1px;width:100px;text-align:center;letter-spacing:0.14px;">0</div>
<div class="td" style="left:621.57px;top:376.1px;width:100px;text-align:center;letter-spacing:0.14px;">0</div>
<div class="td" style="left:679.47px;top:376.1px;width:100px;text-align:center;letter-spacing:0.14px;">0</div>
<div class="td" style="left:740.2700000000001px;top:376.1px;width:100px;text-align:center;letter-spacing:0.14px;">0</div>
<div class="td" style="left:795.87px;top:376.1px;width:100px;text-align:center;letter-spacing:0.14px;">0</div>
<div class="td" style="left:853.07px;top:376.1px;width:100px;text-align:center;letter-spacing:0.14px;">0</div>
<div class="td" style="left:918.4700000000001px;top:376.1px;width:100px;text-align:center;letter-spacing:0.14px;">0</div>
<div class="td" style="left:967px;top:376.1px;width:100px;text-align:right;">0</div>
<div class="td" style="left:1076.5px;top:376.1px;letter-spacing:0.38px;">00:00:00</div>
<div class="td" style="left:1123.39px;top:376.1px;width:100px;text-align:center;letter-spacing:0.38px;">00:00:08</div>
<div class="td" style="left:1190.19px;top:376.1px;width:100px;text-align:center;letter-spacing:0.38px;">00:00:00</div>
<div class="td" style="left:1276.9px;top:376.1px;letter-spacing:0.38px;">00:00:08</div>
<div class="td" style="left:1340.4px;top:376.1px;letter-spacing:0.38px;">00:00:26</div>
<div class="td" style="left:1387.49px;top:376.1px;width:100px;text-align:center;letter-spacing:0.38px;">00:06:35</div>
<div class="td" style="left:1480.6px;top:376.1px;letter-spacing:0.38px;">00:02:21</div>
<div style="position:absolute;left:0px;top:396px;width:1506px;height:1px;background:#e3e3e3;"></div>
<div style="position:absolute;left:0px;top:397px;width:1506px;height:54px;background:#ffffff;"></div>
<div class="td" style="left:5.5px;top:401.1px;letter-spacing:0.14px;">Email<br>Exchange<br>Queue</div>
<div class="td" style="left:39.37000000000001px;top:401.1px;width:100px;text-align:center;letter-spacing:0.14px;">14</div>
<div class="td" style="left:124.25px;top:401.1px;letter-spacing:0.47px;">2025-04-06</div>
<div class="td" style="left:196.89999999999998px;top:401.1px;letter-spacing:0.47px;">2025-04-12</div>
<div class="td" style="left:244.07px;top:401.1px;width:100px;text-align:center;letter-spacing:0.14px;">7</div>
<div class="td" style="left:296.27000000000004px;top:401.1px;width:100px;text-align:center;letter-spacing:0.14px;">6</div>
<div class="td" style="left:355.27000000000004px;top:401.1px;width:100px;text-align:center;letter-spacing:0.14px;">0</div>
<div class="td" style="left:430.67px;top:401.1px;width:100px;text-align:center;letter-spacing:0.14px;">0</div>
<div class="td" style="left:502.27000000000004px;top:401.1px;width:100px;text-align:center;letter-spacing:0.14px;">0</div>
<div class="td" style="left:565.07px;top:401.1px;width:100px;text-align:center;letter-spacing:0.14px;">0</div>
<div class="td" style="left:621.57px;top:401.1px;width:100px;text-align:center;letter-spacing:0.14px;">0</div>
<div class="td" style="left:679.47px;top:401.1px;width:100px;text-align:center;letter-spacing:0.14px;">1</div>
<div class="td" style="left:740.2700000000001px;top:401.1px;width:100px;text-align:center;letter-spacing:0.14px;">0</div>
<div class="td" style="left:795.87px;top:401.1px;width:100px;text-align:center;letter-spacing:0.14px;">0</div>
<div class="td" style="left:853.07px;top:401.1px;width:100px;text-align:center;letter-spacing:0.14px;">0</div>
<div class="td" style="left:918.4700000000001px;top:401.1px;width:100px;text-align:center;letter-spacing:0.14px;">0</div>
<div class="td" style="left:967px;top:401.1px;width:100px;text-align:right;">0</div>
<div class="td" style="left:1076.5px;top:401.1px;letter-spacing:0.38px;">00:00:00</div>
<div class="td" style="left:1123.39px;top:401.1px;width:100px;text-align:center;letter-spacing:0.38px;">00:01:39</div>
<div class="td" style="left:1190.19px;top:401.1px;width:100px;text-align:center;letter-spacing:0.38px;">00:00:14</div>
<div class="td" style="left:1276.9px;top:401.1px;letter-spacing:0.38px;">00:01:42</div>
<div class="td" style="left:1340.4px;top:401.1px;letter-spacing:0.38px;">00:00:49</div>
<div class="td" style="left:1387.49px;top:401.1px;width:100px;text-align:center;letter-spacing:0.38px;">00:17:46</div>
<div class="td" style="left:1480.6px;top:401.1px;letter-spacing:0.38px;">00:07:11</div>
<div style="position:absolute;left:0px;top:451px;width:1506px;height:1px;background:#e3e3e3;"></div>
<div style="position:absolute;left:0px;top:452px;width:1506px;height:39px;background:#fafafa;"></div>
<div class="td" style="left:5.5px;top:456.1px;letter-spacing:0.14px;">LinkedIn-<br>Test</div>
<div class="td" style="left:39.37000000000001px;top:456.1px;width:100px;text-align:center;letter-spacing:0.14px;">14</div>
<div class="td" style="left:124.25px;top:456.1px;letter-spacing:0.47px;">2025-04-06</div>
<div class="td" style="left:196.89999999999998px;top:456.1px;letter-spacing:0.47px;">2025-04-12</div>
<div class="td" style="left:244.07px;top:456.1px;width:100px;text-align:center;letter-spacing:0.14px;">5</div>
<div class="td" style="left:296.27000000000004px;top:456.1px;width:100px;text-align:center;letter-spacing:0.14px;">5</div>
<div class="td" style="left:355.27000000000004px;top:456.1px;width:100px;text-align:center;letter-spacing:0.14px;">0</div>
<div class="td" style="left:430.67px;top:456.1px;width:100px;text-align:center;letter-spacing:0.14px;">0</div>
<div class="td" style="left:502.27000000000004px;top:456.1px;width:100px;text-align:center;letter-spacing:0.14px;">0</div>
<div class="td" style="left:565.07px;top:456.1px;width:100px;text-align:center;letter-spacing:0.14px;">0</div>
<div class="td" style="left:621.57px;top:456.1px;width:100px;text-align:center;letter-spacing:0.14px;">0</div>
<div class="td" style="left:679.47px;top:456.1px;width:100px;text-align:center;letter-spacing:0.14px;">0</div>
<div class="td" style="left:740.2700000000001px;top:456.1px;width:100px;text-align:center;letter-spacing:0.14px;">0</div>
<div class="td" style="left:795.87px;top:456.1px;width:100px;text-align:center;letter-spacing:0.14px;">0</div>
<div class="td" style="left:853.07px;top:456.1px;width:100px;text-align:center;letter-spacing:0.14px;">0</div>
<div class="td" style="left:918.4700000000001px;top:456.1px;width:100px;text-align:center;letter-spacing:0.14px;">0</div>
<div class="td" style="left:967px;top:456.1px;width:100px;text-align:right;">0</div>
<div class="td" style="left:1076.5px;top:456.1px;letter-spacing:0.38px;">00:00:00</div>
<div class="td" style="left:1123.39px;top:456.1px;width:100px;text-align:center;letter-spacing:0.38px;">00:00:00</div>
<div class="td" style="left:1190.19px;top:456.1px;width:100px;text-align:center;letter-spacing:0.38px;">00:00:00</div>
<div class="td" style="left:1276.9px;top:456.1px;letter-spacing:0.38px;">00:00:00</div>
<div class="td" style="left:1340.4px;top:456.1px;letter-spacing:0.38px;">00:00:00</div>
<div class="td" style="left:1387.49px;top:456.1px;width:100px;text-align:center;letter-spacing:0.38px;">00:18:06</div>
<div class="td" style="left:1480.6px;top:456.1px;letter-spacing:0.38px;">00:03:37</div>
<div style="position:absolute;left:0px;top:491px;width:1506px;height:1px;background:#e3e3e3;"></div>
<div style="position:absolute;left:0px;top:492px;width:1506px;height:24px;background:#ffffff;"></div>
<div class="td" style="left:5.5px;top:496.1px;letter-spacing:0.14px;">queue1</div>
<div class="td" style="left:39.37000000000001px;top:496.1px;width:100px;text-align:center;letter-spacing:0.14px;">14</div>
<div class="td" style="left:124.25px;top:496.1px;letter-spacing:0.47px;">2025-04-06</div>
<div class="td" style="left:196.89999999999998px;top:496.1px;letter-spacing:0.47px;">2025-04-12</div>
<div class="td" style="left:244.07px;top:496.1px;width:100px;text-align:center;letter-spacing:0.14px;">62</div>
<div class="td" style="left:296.27000000000004px;top:496.1px;width:100px;text-align:center;letter-spacing:0.14px;">44</div>
<div class="td" style="left:355.27000000000004px;top:496.1px;width:100px;text-align:center;letter-spacing:0.14px;">4</div>
<div class="td" style="left:430.67px;top:496.1px;width:100px;text-align:center;letter-spacing:0.14px;">2</div>
<div class="td" style="left:502.27000000000004px;top:496.1px;width:100px;text-align:center;letter-spacing:0.14px;">0</div>
<div class="td" style="left:565.07px;top:496.1px;width:100px;text-align:center;letter-spacing:0.14px;">0</div>
<div class="td" style="left:621.57px;top:496.1px;width:100px;text-align:center;letter-spacing:0.14px;">4</div>
<div class="td" style="left:679.47px;top:496.1px;width:100px;text-align:center;letter-spacing:0.14px;">4</div>
<div class="td" style="left:740.2700000000001px;top:496.1px;width:100px;text-align:center;letter-spacing:0.14px;">3</div>
<div class="td" style="left:795.87px;top:496.1px;width:100px;text-align:center;letter-spacing:0.14px;">0</div>
<div class="td" style="left:853.07px;top:496.1px;width:100px;text-align:center;letter-spacing:0.14px;">0</div>
<div class="td" style="left:918.4700000000001px;top:496.1px;width:100px;text-align:center;letter-spacing:0.14px;">0</div>
<div class="td" style="left:967px;top:496.1px;width:100px;text-align:right;">1</div>
<div class="td" style="left:1076.5px;top:496.1px;letter-spacing:0.38px;">00:00:00</div>
<div class="td" style="left:1123.39px;top:496.1px;width:100px;text-align:center;letter-spacing:0.38px;">00:02:44</div>
<div class="td" style="left:1190.19px;top:496.1px;width:100px;text-align:center;letter-spacing:0.38px;">00:00:04</div>
<div class="td" style="left:1276.9px;top:496.1px;letter-spacing:0.38px;">00:04:29</div>
<div class="td" style="left:1340.4px;top:496.1px;letter-spacing:0.38px;">00:00:05</div>
<div class="td" style="left:1387.49px;top:496.1px;width:100px;text-align:center;letter-spacing:0.38px;">00:17:00</div>
<div class="td" style="left:1480.6px;top:496.1px;letter-spacing:0.38px;">00:03:21</div>
<div style="position:absolute;left:0px;top:516px;width:1506px;height:1px;background:#e3e3e3;"></div>
<div style="position:absolute;left:0px;top:517px;width:1506px;height:40px;background:#fafafa;"></div>
<div class="td" style="left:5.5px;top:521.1px;letter-spacing:0.14px;">talha-<br>chat</div>
<div class="td" style="left:39.37000000000001px;top:521.1px;width:100px;text-align:center;letter-spacing:0.14px;">14</div>
<div class="td" style="left:124.25px;top:521.1px;letter-spacing:0.47px;">2025-04-06</div>
<div class="td" style="left:196.89999999999998px;top:521.1px;letter-spacing:0.47px;">2025-04-12</div>
<div class="td" style="left:244.07px;top:521.1px;width:100px;text-align:center;letter-spacing:0.14px;">8</div>
<div class="td" style="left:296.27000000000004px;top:521.1px;width:100px;text-align:center;letter-spacing:0.14px;">5</div>
<div class="td" style="left:355.27000000000004px;top:521.1px;width:100px;text-align:center;letter-spacing:0.14px;">1</div>
<div class="td" style="left:430.67px;top:521.1px;width:100px;text-align:center;letter-spacing:0.14px;">0</div>
<div class="td" style="left:502.27000000000004px;top:521.1px;width:100px;text-align:center;letter-spacing:0.14px;">0</div>
<div class="td" style="left:565.07px;top:521.1px;width:100px;text-align:center;letter-spacing:0.14px;">0</div>
<div class="td" style="left:621.57px;top:521.1px;width:100px;text-align:center;letter-spacing:0.14px;">1</div>
<div class="td" style="left:679.47px;top:521.1px;width:100px;text-align:center;letter-spacing:0.14px;">1</div>
<div class="td" style="left:740.2700000000001px;top:521.1px;width:100px;text-align:center;letter-spacing:0.14px;">0</div>
<div class="td" style="left:795.87px;top:521.1px;width:100px;text-align:center;letter-spacing:0.14px;">0</div>
<div class="td" style="left:853.07px;top:521.1px;width:100px;text-align:center;letter-spacing:0.14px;">0</div>
<div class="td" style="left:918.4700000000001px;top:521.1px;width:100px;text-align:center;letter-spacing:0.14px;">0</div>
<div class="td" style="left:967px;top:521.1px;width:100px;text-align:right;">0</div>
<div class="td" style="left:1076.5px;top:521.1px;letter-spacing:0.38px;">00:00:00</div>
<div class="td" style="left:1123.39px;top:521.1px;width:100px;text-align:center;letter-spacing:0.38px;">00:00:54</div>
<div class="td" style="left:1190.19px;top:521.1px;width:100px;text-align:center;letter-spacing:0.38px;">00:00:06</div>
<div class="td" style="left:1276.9px;top:521.1px;letter-spacing:0.38px;">00:00:54</div>
<div class="td" style="left:1340.4px;top:521.1px;letter-spacing:0.38px;">00:00:26</div>
<div class="td" style="left:1387.49px;top:521.1px;width:100px;text-align:center;letter-spacing:0.38px;">00:02:06</div>
<div class="td" style="left:1480.6px;top:521.1px;letter-spacing:0.38px;">00:01:05</div>
<div style="position:absolute;left:0px;top:557px;width:1506px;height:1px;background:#e3e3e3;"></div>
<div style="position:absolute;left:0px;top:558px;width:1506px;height:24px;background:#ffffff;"></div>
<div class="td" style="left:5.5px;top:562.1px;letter-spacing:0.14px;">voice</div>
<div class="td" style="left:39.37000000000001px;top:562.1px;width:100px;text-align:center;letter-spacing:0.14px;">14</div>
<div class="td" style="left:124.25px;top:562.1px;letter-spacing:0.47px;">2025-04-06</div>
<div class="td" style="left:196.89999999999998px;top:562.1px;letter-spacing:0.47px;">2025-04-12</div>
<div class="td" style="left:244.07px;top:562.1px;width:100px;text-align:center;letter-spacing:0.14px;">202</div>
<div class="td" style="left:296.27000000000004px;top:562.1px;width:100px;text-align:center;letter-spacing:0.14px;">50</div>
<div class="td" style="left:355.27000000000004px;top:562.1px;width:100px;text-align:center;letter-spacing:0.14px;">150</div>
<div class="td" style="left:430.67px;top:562.1px;width:100px;text-align:center;letter-spacing:0.14px;">0</div>
<div class="td" style="left:502.27000000000004px;top:562.1px;width:100px;text-align:center;letter-spacing:0.14px;">0</div>
<div class="td" style="left:565.07px;top:562.1px;width:100px;text-align:center;letter-spacing:0.14px;">0</div>
<div class="td" style="left:621.57px;top:562.1px;width:100px;text-align:center;letter-spacing:0.14px;">0</div>
<div class="td" style="left:679.47px;top:562.1px;width:100px;text-align:center;letter-spacing:0.14px;">0</div>
<div class="td" style="left:740.2700000000001px;top:562.1px;width:100px;text-align:center;letter-spacing:0.14px;">1</div>
<div class="td" style="left:795.87px;top:562.1px;width:100px;text-align:center;letter-spacing:0.14px;">0</div>
<div class="td" style="left:853.07px;top:562.1px;width:100px;text-align:center;letter-spacing:0.14px;">0</div>
<div class="td" style="left:918.4700000000001px;top:562.1px;width:100px;text-align:center;letter-spacing:0.14px;">0</div>
<div class="td" style="left:967px;top:562.1px;width:100px;text-align:right;">1</div>
<div class="td" style="left:1076.5px;top:562.1px;letter-spacing:0.38px;">00:00:00</div>
<div class="td" style="left:1123.39px;top:562.1px;width:100px;text-align:center;letter-spacing:0.38px;">00:01:47</div>
<div class="td" style="left:1190.19px;top:562.1px;width:100px;text-align:center;letter-spacing:0.38px;">00:00:01</div>
<div class="td" style="left:1276.9px;top:562.1px;letter-spacing:0.38px;">00:04:32</div>
<div class="td" style="left:1340.4px;top:562.1px;letter-spacing:0.38px;">00:00:04</div>
<div class="td" style="left:1387.49px;top:562.1px;width:100px;text-align:center;letter-spacing:0.38px;">00:05:35</div>
<div class="td" style="left:1480.6px;top:562.1px;letter-spacing:0.38px;">00:00:54</div>
<div style="position:absolute;left:0px;top:582px;width:1506px;height:1px;background:#e3e3e3;"></div>
<div style="position:absolute;left:0px;top:583px;width:1506px;height:39px;background:#fafafa;"></div>
<div class="td" style="left:5.5px;top:587.1px;letter-spacing:0.14px;">Voice-<br>queue</div>
<div class="td" style="left:39.37000000000001px;top:587.1px;width:100px;text-align:center;letter-spacing:0.14px;">14</div>
<div class="td" style="left:124.25px;top:587.1px;letter-spacing:0.47px;">2025-04-06</div>
<div class="td" style="left:196.89999999999998px;top:587.1px;letter-spacing:0.47px;">2025-04-12</div>
<div class="td" style="left:244.07px;top:587.1px;width:100px;text-align:center;letter-spacing:0.14px;">1</div>
<div class="td" style="left:296.27000000000004px;top:587.1px;width:100px;text-align:center;letter-spacing:0.14px;">1</div>
<div class="td" style="left:355.27000000000004px;top:587.1px;width:100px;text-align:center;letter-spacing:0.14px;">0</div>
<div class="td" style="left:430.67px;top:587.1px;width:100px;text-align:center;letter-spacing:0.14px;">0</div>
<div class="td" style="left:502.27000000000004px;top:587.1px;width:100px;text-align:center;letter-spacing:0.14px;">0</div>
<div class="td" style="left:565.07px;top:587.1px;width:100px;text-align:center;letter-spacing:0.14px;">0</div>
<div class="td" style="left:621.57px;top:587.1px;width:100px;text-align:center;letter-spacing:0.14px;">0</div>
<div class="td" style="left:679.47px;top:587.1px;width:100px;text-align:center;letter-spacing:0.14px;">0</div>
<div class="td" style="left:740.2700000000001px;top:587.1px;width:100px;text-align:center;letter-spacing:0.14px;">0</div>
<div class="td" style="left:795.87px;top:587.1px;width:100px;text-align:center;letter-spacing:0.14px;">0</div>
<div class="td" style="left:853.07px;top:587.1px;width:100px;text-align:center;letter-spacing:0.14px;">0</div>
<div class="td" style="left:918.4700000000001px;top:587.1px;width:100px;text-align:center;letter-spacing:0.14px;">0</div>
<div class="td" style="left:967px;top:587.1px;width:100px;text-align:right;">0</div>
<div class="td" style="left:1076.5px;top:587.1px;letter-spacing:0.38px;">00:00:00</div>
<div class="td" style="left:1123.39px;top:587.1px;width:100px;text-align:center;letter-spacing:0.38px;">00:00:00</div>
<div class="td" style="left:1190.19px;top:587.1px;width:100px;text-align:center;letter-spacing:0.38px;">00:00:00</div>
<div class="td" style="left:1276.9px;top:587.1px;letter-spacing:0.38px;">00:00:00</div>
<div class="td" style="left:1340.4px;top:587.1px;letter-spacing:0.38px;">00:00:06</div>
<div class="td" style="left:1387.49px;top:587.1px;width:100px;text-align:center;letter-spacing:0.38px;">00:00:06</div>
<div class="td" style="left:1480.6px;top:587.1px;letter-spacing:0.38px;">00:00:06</div>
</div>
<div style="position:absolute;left:1783px;top:234px;width:15px;height:630px;background:#fafafa;"></div>
<svg class="ic" style="left:1785px;top:241px" width="11" height="9" viewBox="0 0 11 9"><path d="M5.5 1L10 8H1z" fill="#8e8e8e" stroke="#8e8e8e" stroke-width="0.8" stroke-linejoin="round"/></svg>
<div style="position:absolute;left:1786px;top:257px;width:9px;height:246px;background:#8e8e8e;border-radius:4.5px;"></div>
<svg class="ic" style="left:1785px;top:834px" width="11" height="9" viewBox="0 0 11 9"><path d="M5.5 8L10 1H1z" fill="#8e8e8e" stroke="#8e8e8e" stroke-width="0.8" stroke-linejoin="round"/></svg>
<div style="position:absolute;left:277px;top:849px;width:1506px;height:15px;background:#fafafa;"></div>
<svg class="ic" style="left:284px;top:852px" width="9" height="11" viewBox="0 0 9 11"><path d="M1 5.5L8 1v9z" fill="#8e8e8e" stroke="#8e8e8e" stroke-width="0.8" stroke-linejoin="round"/></svg>
<div style="position:absolute;left:300px;top:853px;width:851px;height:9px;background:#8e8e8e;border-radius:4.5px;"></div>
<svg class="ic" style="left:1767px;top:852px" width="9" height="11" viewBox="0 0 9 11"><path d="M8 5.5L1 1v9z" fill="#8e8e8e" stroke="#8e8e8e" stroke-width="0.8" stroke-linejoin="round"/></svg>
<div style="position:absolute;left:1857px;top:0px;width:15px;height:920px;background:#2b2b2b;"></div>
<div style="position:absolute;left:1857px;top:0px;width:1px;height:920px;background:#1e1e1e;"></div>
<svg class="ic" style="left:1859px;top:7px" width="11" height="9" viewBox="0 0 11 9"><path d="M5.5 1L10 8H1z" fill="#a8a8a8" stroke="#a8a8a8" stroke-width="0.8" stroke-linejoin="round"/></svg>
<div style="position:absolute;left:1860px;top:104px;width:9px;height:756px;background:#a3a3a3;border-radius:4.5px;"></div>
<svg class="ic" style="left:1859px;top:904px" width="11" height="9" viewBox="0 0 11 9"><path d="M5.5 8L10 1H1z" fill="#a8a8a8" stroke="#a8a8a8" stroke-width="0.8" stroke-linejoin="round"/></svg>
<svg class="ic" style="left:0;top:0" width="10" height="10" viewBox="0 0 10 10"><path d="M0 0H9A9 9 0 0 0 0 9z" fill="#2a2a2a"/></svg>
<svg class="ic" style="left:0;top:910px" width="10" height="10" viewBox="0 0 10 10"><path d="M0 10H9A9 9 0 0 1 0 1z" fill="#2a2a2a"/></svg>
<svg class="ic" style="left:261px;top:213px" width="16" height="24" viewBox="0 0 16 24"><path d="M1.3 2.1V18.6L5.4 15.1L7.9 20.4L10.6 19.5L8.6 14.6L12.9 14.3Z" fill="#fff" stroke="#15151a" stroke-width="1.15" stroke-linejoin="round"/></svg>
</body></html>
